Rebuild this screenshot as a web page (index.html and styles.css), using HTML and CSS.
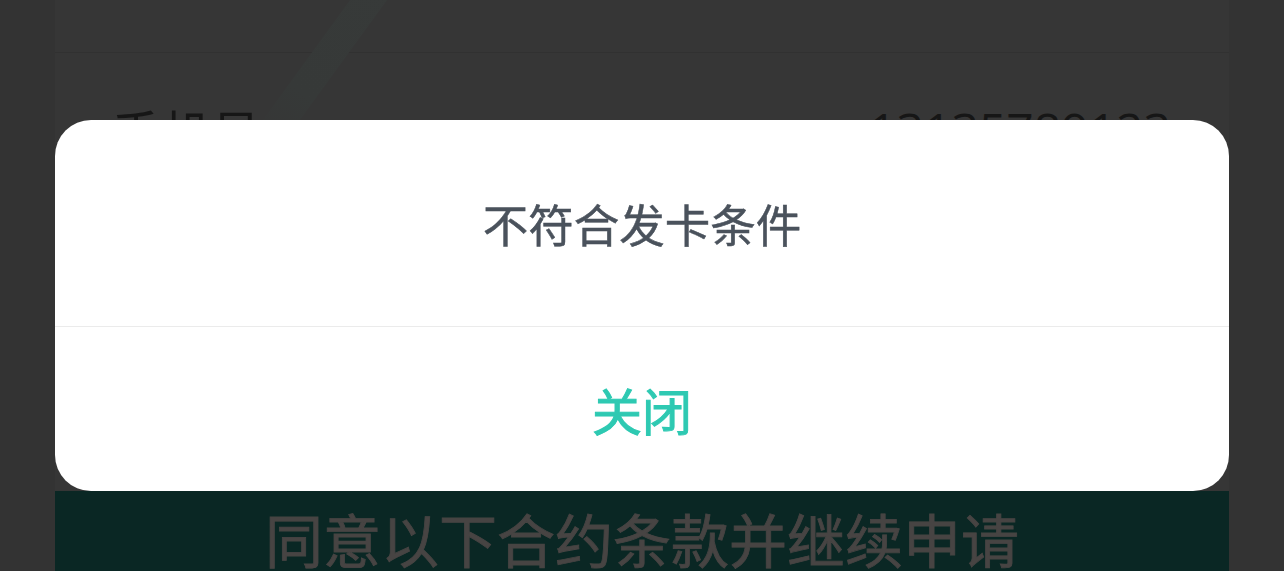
FILE: index.html
```html
<!DOCTYPE html>
<html lang="zh-CN">

<head>
    <meta charset="UTF-8">
    <meta name="viewport" content="width=device-width, initial-scale=1.0">
    <title>申请</title>
    <link rel="stylesheet" href="styles.css">
</head>

<body>
    <div class="page">
        <div class="stripe"></div>
        <div class="top-row"></div>
        <div class="info-row">
            <span class="label">手机号</span>
            <span class="value">13135789123</span>
        </div>
        <div class="apply">
            <button>同意以下合约条款并继续申请</button>
        </div>
    </div>

    <div class="mask">
        <div class="modal">
            <div class="modal-body">不符合发卡条件</div>
            <div class="modal-footer">
                <button class="close">关闭</button>
            </div>
        </div>
    </div>
</body>

</html>
```

FILE: styles.css
```css
* {
    margin: 0;
    border: 0;
    padding: 0;
    box-sizing: border-box;
}

body {
    height: 100vh;
    overflow: hidden;
    background-color: #333333;
    font-family: "Noto Sans CJK SC", "Noto Sans", sans-serif;
}

.page {
    position: relative;
    width: 1174px;
    height: 585px;
    margin: 0 auto;
    display: flex;
    flex-direction: column;
    background-color: #363636;
    overflow: hidden;
}

.stripe {
    position: absolute;
    top: -40px;
    left: 255px;
    width: 30px;
    height: 200px;
    background: linear-gradient(to bottom, #373a39, #363938 70%, #363636);
    transform: rotate(36deg);
}

.top-row {
    height: 53px;
    border-bottom: 1px solid #313131;
}

.info-row {
    display: flex;
    justify-content: space-between;
    padding: 48px 58px 0 56px;
    font-size: 50px;
    line-height: 1.2;
    color: #161616;
}

.info-row .value {
    font-family: "Open Sans", sans-serif;
    font-size: 48px;
}

.apply {
    margin-top: auto;
    height: 94px;
    background-color: #0a2724;
    display: flex;
    justify-content: center;
    align-items: center;
}

.apply button {
    background: none;
    font-family: inherit;
    font-size: 58px;
    color: #474443;
    -webkit-text-stroke: 0.8px #474443;
}

.mask {
    position: fixed;
    inset: 0;
}

.modal {
    position: absolute;
    top: 120px;
    left: 55px;
    width: 1174px;
    height: 371px;
    display: flex;
    flex-direction: column;
    background-color: white;
    border-radius: 36px;
    overflow: hidden;
}

.modal-body {
    height: 207px;
    display: flex;
    justify-content: center;
    align-items: center;
    font-size: 45.5px;
    color: #4a525c;
    -webkit-text-stroke: 0.5px #4a525c;
    border-bottom: 1px solid #ebebeb;
}

.modal-footer {
    flex: 1;
    display: flex;
    justify-content: center;
    align-items: center;
}

.close {
    background: none;
    font-family: inherit;
    font-size: 50px;
    color: #2ec9b2;
    -webkit-text-stroke: 1px #2ec9b2;
}
```
